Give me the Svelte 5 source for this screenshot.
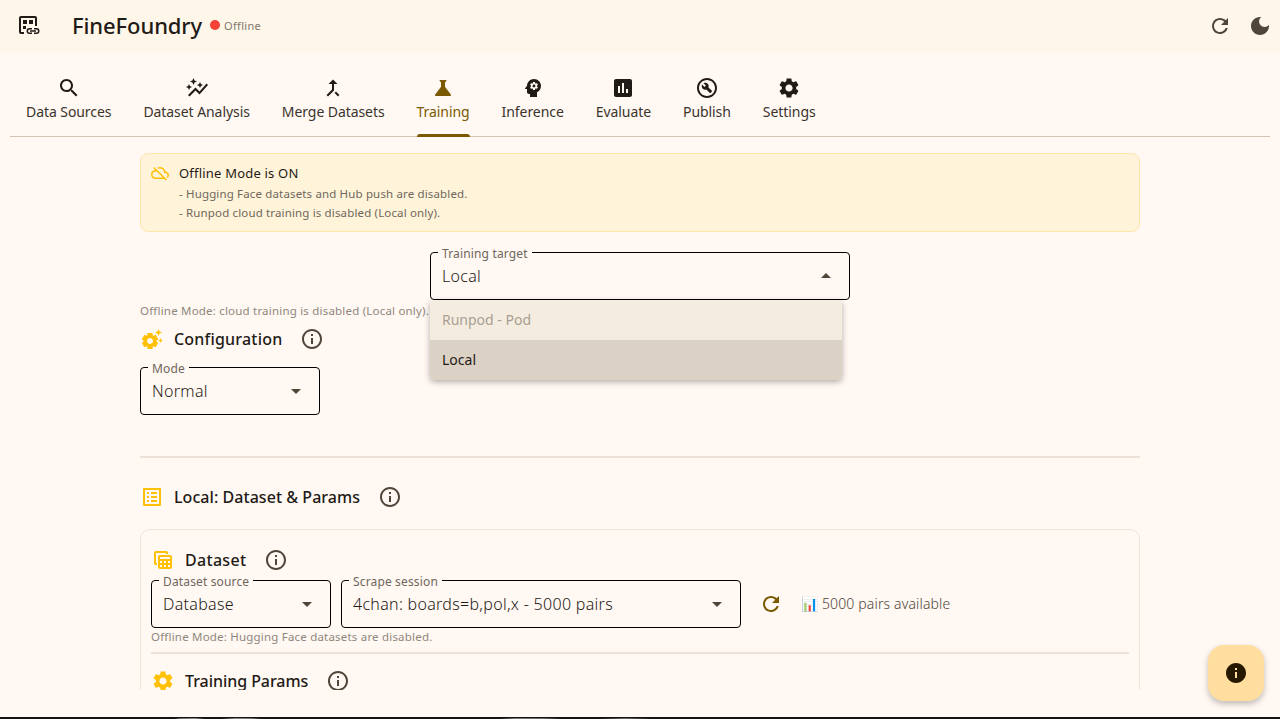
<script>
  const d = {
    search: 'M15.5 14h-.79l-.28-.27C15.41 12.59 16 11.11 16 9.5 16 5.91 13.09 3 9.5 3S3 5.91 3 9.5 5.91 16 9.5 16c1.61 0 3.09-.59 4.23-1.57l.27.28v.79l5 4.99L20.49 19l-4.99-5zm-6 0C7.01 14 5 11.99 5 9.5S7.01 5 9.5 5 14 7.01 14 9.5 11.99 14 9.5 14z',
    graph: 'M14.06 9.94 12 9l2.06-.94L15 6l.94 2.06L18 9l-2.06.94L15 12l-.94-2.06zM4 14l.94-2.06L7 11l-2.06-.94L4 8l-.94 2.06L1 11l2.06.94L4 14zm4.5-5 1.09-2.41L12 5.5 9.59 4.41 8.5 2 7.41 4.41 5 5.5l2.41 1.09L8.5 9zm-4 11.5 6-6.01 4 4L23 8.93l-1.41-1.41-7.09 7.97-4-4L3 19l1.5 1.5z',
    merge: 'M17 20.41 18.41 19 15 15.59 13.59 17 17 20.41zM7.5 8H11v5.59L5.59 19 7 20.41l6-6V8h3.5L12 3.5 7.5 8z',
    science: 'M19.8 18.4 14 10.67V6.5l1.35-1.69c.26-.33.03-.81-.39-.81H9.04c-.42 0-.65.48-.39.81L10 6.5v4.17L4.2 18.4c-.49.66-.02 1.6.8 1.6h14c.82 0 1.29-.94.8-1.6z',
    psych: 'M13 8.57c-.79 0-1.43.64-1.43 1.43s.64 1.43 1.43 1.43 1.43-.64 1.43-1.43-.64-1.43-1.43-1.43zM13 3C9.25 3 6.2 5.94 6.02 9.64L4.1 12.2c-.25.33-.01.8.4.8H6v3c0 1.1.9 2 2 2h1v3h7v-4.68c2.36-1.12 4-3.53 4-6.32 0-3.87-3.13-7-7-7zm3 7c0 .13-.01.26-.02.39l.83.66c.08.06.1.16.05.25l-.8 1.39c-.05.09-.16.12-.24.09l-.99-.4c-.21.16-.43.29-.67.39L14 13.83c-.01.1-.1.17-.2.17h-1.6c-.1 0-.18-.07-.2-.17l-.15-1.06c-.25-.1-.47-.23-.68-.39l-.99.4c-.09.03-.2 0-.25-.09l-.8-1.39c-.05-.08-.03-.19.05-.25l.84-.66c-.01-.13-.02-.26-.02-.39s.02-.27.04-.39l-.85-.66c-.08-.06-.1-.16-.05-.26l.8-1.38c.05-.09.15-.12.24-.09l1 .4c.2-.15.43-.29.67-.39L12 6.17c.02-.1.1-.17.2-.17h1.6c.1 0 .18.07.2.17l.15 1.06c.24.1.46.23.67.39l1-.4c.09-.03.2 0 .24.09l.8 1.38c.05.09.03.2-.05.26l-.85.66c.03.12.04.25.04.39z',
    assess: 'M19 3H5c-1.1 0-2 .9-2 2v14c0 1.1.9 2 2 2h14c1.1 0 2-.9 2-2V5c0-1.1-.9-2-2-2zM9 17H7v-7h2v7zm4 0h-2V7h2v10zm4 0h-2v-4h2v4z',
    build: 'M12 2C6.48 2 2 6.48 2 12s4.48 10 10 10 10-4.48 10-10S17.52 2 12 2zm0 18c-4.41 0-8-3.59-8-8s3.59-8 8-8 8 3.59 8 8-3.59 8-8 8zM13.49 11.38c.43-1.22.17-2.64-.81-3.62-1.11-1.11-2.79-1.3-4.1-.59l2.35 2.35-1.41 1.41-2.35-2.35c-.71 1.32-.52 2.99.59 4.1.98.98 2.4 1.24 3.62.81l3.41 3.41c.2.2.51.2.71 0l1.4-1.4c.2-.2.2-.51 0-.71l-3.41-3.41z',
    gear: 'M19.14 12.94c.04-.3.06-.61.06-.94 0-.32-.02-.64-.07-.94l2.03-1.58c.18-.14.23-.41.12-.61l-1.92-3.32c-.12-.22-.37-.29-.59-.22l-2.39.96c-.5-.38-1.03-.7-1.62-.94l-.36-2.54c-.04-.24-.24-.41-.48-.41h-3.84c-.24 0-.43.17-.47.41l-.36 2.54c-.59.24-1.13.57-1.62.94l-2.39-.96c-.22-.08-.47 0-.59.22L2.74 8.87c-.12.21-.08.47.12.61l2.03 1.58c-.05.3-.09.63-.09.94s.02.64.07.94l-2.03 1.58c-.18.14-.23.41-.12.61l1.92 3.32c.12.22.37.29.59.22l2.39-.96c.5.38 1.03.7 1.62.94l.36 2.54c.05.24.24.41.48.41h3.84c.24 0 .44-.17.47-.41l.36-2.54c.59-.24 1.13-.56 1.62-.94l2.39.96c.22.08.47 0 .59-.22l1.92-3.32c.12-.22.07-.47-.12-.61l-2.01-1.58zM12 15.6c-1.98 0-3.6-1.62-3.6-3.6s1.62-3.6 3.6-3.6 3.6 1.62 3.6 3.6-1.62 3.6-3.6 3.6z',
    refresh: 'M17.65 6.35C16.2 4.9 14.21 4 12 4c-4.42 0-7.99 3.58-7.99 8s3.57 8 7.99 8c3.73 0 6.84-2.55 7.73-6h-2.08c-.82 2.33-3.04 4-5.65 4-3.31 0-6-2.69-6-6s2.69-6 6-6c1.66 0 3.14.69 4.22 1.78L13 11h7V4l-2.35 2.35z',
    moon: 'M12 3c-4.97 0-9 4.03-9 9s4.03 9 9 9 9-4.03 9-9c0-.46-.04-.92-.1-1.36-.98 1.37-2.58 2.26-4.4 2.26-2.98 0-5.4-2.42-5.4-5.4 0-1.81.89-3.42 2.26-4.4-.44-.06-.9-.1-1.36-.1z',
    cloudoff: 'M24 15c0-2.64-2.05-4.78-4.65-4.96C18.67 6.59 15.64 4 12 4c-1.33 0-2.57.36-3.65.97l1.49 1.49C10.51 6.17 11.23 6 12 6c3.04 0 5.5 2.46 5.5 5.5v.5H19c1.66 0 3 1.34 3 3 0 .99-.48 1.85-1.21 2.4l1.41 1.41c1.09-.92 1.8-2.27 1.8-3.81zM4.41 3.86 3 5.27l2.77 2.77h-.42C2.34 8.36 0 10.91 0 14c0 3.31 2.69 6 6 6h11.73l2 2 1.41-1.41L4.41 3.86zM6 18c-2.21 0-4-1.79-4-4s1.79-4 4-4h1.73l8 8H6z',
    info: 'M11 7h2v2h-2zm0 4h2v6h-2zm1-9C6.48 2 2 6.48 2 12s4.48 10 10 10 10-4.48 10-10S17.52 2 12 2zm0 18c-4.41 0-8-3.59-8-8s3.59-8 8-8 8 3.59 8 8-3.59 8-8 8z',
    infoFill: 'M12 2C6.48 2 2 6.48 2 12s4.48 10 10 10 10-4.48 10-10S17.52 2 12 2zm1 15h-2v-6h2v6zm0-8h-2V7h2v2z',
    suggest: 'M17.41 6.59 15 5.5l2.41-1.09L18.5 2l1.09 2.41L22 5.5l-2.41 1.09L18.5 9l-1.09-2.41zm3.87 6.13L20.5 11l-.78 1.72-1.72.78 1.72.78.78 1.72.78-1.72L23 13.5l-1.72-.78zm-5.04 1.65 1.94 1.47-2.5 4.33-2.24-.94c-.2.13-.42.26-.64.37l-.3 2.4h-5l-.3-2.41c-.22-.11-.43-.23-.64-.37l-2.24.94-2.5-4.33 1.94-1.47c-.01-.11-.01-.24-.01-.36s0-.25.01-.37l-1.94-1.47 2.5-4.33 2.24.94c.2-.13.42-.26.64-.37L7.5 6h5l.3 2.41c.22.11.43.23.64.37l2.24-.94 2.5 4.33-1.94 1.47c.01.12.01.24.01.37s0 .24-.01.36zM13 14c0-1.66-1.34-3-3-3s-3 1.34-3 3 1.34 3 3 3 3-1.34 3-3z',
    list: 'M19 5v14H5V5h14m1.1-2H3.9c-.5 0-.9.4-.9.9v16.2c0 .4.4.9.9.9h16.2c.4 0 .9-.5.9-.9V3.9c0-.5-.5-.9-.9-.9zM11 7h6v2h-6V7zm0 4h6v2h-6v-2zm0 4h6v2h-6zM7 7h2v2H7zm0 4h2v2H7zm0 4h2v2H7z',
    table: 'M19 7H9c-1.1 0-2 .9-2 2v10c0 1.1.9 2 2 2h10c1.1 0 2-.9 2-2V9c0-1.1-.9-2-2-2zm0 2v2H9V9h10zm-6 6v-2h2v2h-2zm2 2v2h-2v-2h2zm-4-2H9v-2h2v2zm6-2h2v2h-2v-2zm-8 4h2v2H9v-2zm8 2v-2h2v2h-2zM6 17H5c-1.1 0-2-.9-2-2V5c0-1.1.9-2 2-2h10c1.1 0 2 .9 2 2v1h-2V5H5v10h1v2z',
    logo: 'M4 2h14a2 2 0 0 1 2 2v8h-2V4H4v14h3v2H4a2 2 0 0 1-2-2V4a2 2 0 0 1 2-2zM6 6h4v4H6zM12 6h4v4h-4zM6 12h3v3H6zM15 14h-2.5a3 3 0 0 0 0 6H15v-1.5h-2.5a1.5 1.5 0 0 1 0-3H15zM17 14h2.5a3 3 0 0 1 0 6H17v-1.5h2.5a1.5 1.5 0 0 0 0-3H17zM13 16.25h6v1.5h-6z',
  };
  const tabs = [
    ['Data Sources', d.search], ['Dataset Analysis', d.graph], ['Merge Datasets', d.merge],
    ['Training', d.science, true], ['Inference', d.psych], ['Evaluate', d.assess],
    ['Publish', d.build], ['Settings', d.gear],
  ];
</script>

{#snippet icon(path, size = 24)}
  <svg width={size} height={size} viewBox="0 0 24 24" fill="currentColor" aria-hidden="true"><path d={path} /></svg>
{/snippet}

{#snippet arrow(up = false)}
  <svg class="arrow" width="24" height="24" viewBox="0 0 24 24" fill="currentColor" aria-hidden="true"><path d={up ? 'M7 14l5-5 5 5z' : 'M7 10l5 5 5-5z'} /></svg>
{/snippet}

{#snippet heading(path, title, cls = '')}
  <div class="heading {cls}">
    <span class="hicon">{@render icon(path, 24)}</span>
    <span class="htitle">{title}</span>
    <span class="hinfo">{@render icon(d.info, 24)}</span>
  </div>
{/snippet}

<div class="page">
  <header class="top">
    <span class="logo">{@render icon(d.logo, 24)}</span>
    <h1>FineFoundry</h1>
    <span class="dot"></span>
    <span class="status">Offline</span>
    <span class="spacer"></span>
    <span class="act a1">{@render icon(d.refresh, 24)}</span>
    <span class="act a2">{@render icon(d.moon, 24)}</span>
  </header>

  <nav class="tabs">
    {#each tabs as t}
      <div class="tab" class:active={t[2]}>
        {@render icon(t[1], 24)}
        <span>{t[0]}</span>
      </div>
    {/each}
  </nav>

  <main class="scroll">
    <div class="col">
      <section class="banner">
        <span class="bicon">{@render icon(d.cloudoff, 18)}</span>
        <div class="btext">
          <div class="btitle">Offline Mode is ON</div>
          <div class="bline">- Hugging Face datasets and Hub push are disabled.</div>
          <div class="bline">- Runpod cloud training is disabled (Local only).</div>
        </div>
      </section>

      <div class="target-row">
        <div class="field target">
          <span class="flabel">Training target</span>
          <span class="fvalue">Local</span>
          {@render arrow(true)}
          <div class="menu">
            <div class="opt disabled">Runpod - Pod</div>
            <div class="opt sel">Local</div>
          </div>
        </div>
      </div>
      <p class="help h1">Offline Mode: cloud training is disabled (Local only).</p>

      {@render heading(d.suggest, 'Configuration', 'config')}
      <div class="field mode">
        <span class="flabel">Mode</span>
        <span class="fvalue">Normal</span>
        {@render arrow()}
      </div>

      <hr class="rule r1" />

      {@render heading(d.list, 'Local: Dataset & Params', 'local')}

      <section class="card">
        {@render heading(d.table, 'Dataset', 'dataset')}
        <div class="row">
          <div class="field source">
            <span class="flabel">Dataset source</span>
            <span class="fvalue">Database</span>
            {@render arrow()}
          </div>
          <div class="field session">
            <span class="flabel">Scrape session</span>
            <span class="fvalue">4chan: boards=b,pol,x - 5000 pairs</span>
            {@render arrow()}
          </div>
          <span class="reload">{@render icon(d.refresh, 24)}</span>
          <span class="pairs">📊 5000 pairs available</span>
        </div>
        <p class="help h2">Offline Mode: Hugging Face datasets are disabled.</p>
        <hr class="rule r2" />
        {@render heading(d.gear, 'Training Params', 'params')}
      </section>
    </div>
  </main>

  <button class="fab" aria-label="Info">{@render icon(d.infoFill, 24)}</button>
  <div class="edge"></div>
</div>

<style>
  :global(body) { margin: 0; background: #fff8f3; }
  .page {
    position: relative;
    width: 1280px;
    height: 719px;
    overflow: hidden;
    display: flex;
    flex-direction: column;
    background: #fff8f3;
    color: #1f1b16;
    font-family: "Noto Sans", "Open Sans", sans-serif;
  }
  svg { display: block; flex: none; }
  .top {
    height: 52px;
    flex: none;
    display: flex;
    align-items: center;
    background: #fff6ea;
    padding: 0 8px 0 17px;
  }
  .logo { width: 24px; height: 24px; margin-top: -1px; }
  h1 {
    margin: -2px 0 0 31px;
    font-size: 22px;
    letter-spacing: -0.1px;
    font-weight: 500;
    color: #1f1b16;
    line-height: 28px;
  }
  .dot { width: 10px; height: 10px; border-radius: 50%; background: #f44336; margin: -2px 0 0 8px; }
  .status { margin: -1px 0 0 4px; font-size: 11px; letter-spacing: 0.3px; color: #7e766b; }
  .spacer { flex: 1; }
  .act { color: #4f4539; }
  .a1 { margin-right: 16px; }

  .tabs {
    flex: none;
    height: 85px;
    box-sizing: border-box;
    margin: 0 10px;
    display: flex;
    border-bottom: 1px solid #d3c4b4;
  }
  .tab {
    display: flex;
    flex-direction: column;
    align-items: center;
    padding: 24px 16px 0;
    gap: 2px;
    position: relative;
    font-size: 14px;
    letter-spacing: -0.07px;
    line-height: 20px;
    color: #1f1b16;
  }
  .tab span { color: #3a342c; }
  .tab.active { color: #7a5900; }
  .tab.active span { color: #7a5900; }
  .tab.active::after {
    content: '';
    position: absolute;
    left: 16px;
    right: 16px;
    bottom: -1px;
    height: 3px;
    border-radius: 3px 3px 0 0;
    background: #7a5900;
  }

  .scroll { flex: none; height: 553px; overflow: hidden; }
  .col { width: 1000px; margin: 0 auto; padding-top: 16px; }

  .banner {
    box-sizing: border-box;
    height: 79px;
    display: flex;
    gap: 10px;
    padding: 10px;
    background: #fff3d9;
    border: 1px solid #ffe6ad;
    border-radius: 8px;
  }
  .bicon { color: #ffc107; }
  .btitle { font-size: 13px; letter-spacing: 0.2px; line-height: 18px; margin-bottom: 2px; color: #1f1b16; }
  .bline { font-size: 11.5px; letter-spacing: 0.15px; line-height: 19px; color: #6f675c; }

  .target-row { display: flex; justify-content: center; margin-top: 20px; }
  .field {
    box-sizing: border-box;
    position: relative;
    height: 48px;
    flex: none;
    border: 1px solid #000;
    border-radius: 4px;
    display: flex;
    align-items: center;
    justify-content: space-between;
    padding: 0 11px;
  }
  .arrow { color: #4f4539; }
  .flabel {
    position: absolute;
    left: 7px;
    top: -5px;
    padding: 0 4px;
    background: #fff8f3;
    font-size: 12px;
    letter-spacing: 0.15px;
    line-height: 12px;
    color: #6f675c;
    white-space: nowrap;
  }
  .fvalue { font-size: 16px; letter-spacing: 0.3px; font-weight: 300; color: #1f1b16; white-space: nowrap; }
  .target { width: 420px; }
  .mode { width: 180px; margin-top: 16px; }
  .source { width: 180px; }
  .session { width: 400px; }
  .menu {
    position: absolute;
    left: -1px;
    top: 47px;
    width: 412px;
    border-radius: 4px;
    overflow: hidden;
    box-shadow: 0 2px 6px rgba(0, 0, 0, 0.3);
    z-index: 2;
    font-size: 14px;
  }
  .opt { height: 40px; line-height: 40px; padding-left: 12px; }
  .disabled { background: #f5ece0; color: #a89f94; }
  .sel { background: #dbd1c5; color: #1f1b16; }

  .help { margin: 0; font-size: 11.5px; letter-spacing: 0.2px; line-height: 14px; color: #8f877c; white-space: nowrap; }
  .h1 { margin-top: 4px; }
  .heading { display: flex; align-items: center; height: 24px; }
  .hicon { color: #ffc107; width: 24px; margin-right: 10px; }
  .htitle { font-size: 16px; line-height: 16px; font-weight: 500; color: #1f1b16; }
  .hinfo { color: #4f4539; margin-left: 18px; }
  .config { margin-top: 9px; }
  .config .htitle { letter-spacing: 0.2px; }
  .dataset .htitle { letter-spacing: 0.3px; }
  .local { margin-top: 27px; }
  .local .htitle { letter-spacing: 0.05px; }
  .params .htitle { letter-spacing: -0.05px; }
  .rule { border: 0; height: 2px; background: #ebe1d6; margin: 0; }
  .r1 { margin-top: 41px; }
  .card {
    margin-top: 20px;
    box-sizing: border-box;
    height: 300px;
    border: 1px solid #eee5da;
    border-radius: 10px;
    padding: 18px 10px 0;
  }
  .row { display: flex; align-items: center; gap: 10px; margin-top: 8px; }
  .reload { color: #7a5900; margin-left: 8px; }
  .pairs { margin: -2px 0 0 8px; font-size: 14px; letter-spacing: 0.15px; color: #4f4539; font-weight: 300; }
  .h2 { margin-top: 2px; }
  .r2 { margin-top: 8px; }
  .params { margin-top: 15px; }

  .fab {
    position: absolute;
    left: 1208px;
    top: 645px;
    width: 56px;
    height: 56px;
    border: 0;
    border-radius: 16px;
    background: #ffdea0;
    color: #261900;
    padding: 16px;
    box-shadow: 0 3px 6px rgba(0, 0, 0, 0.25);
  }
  .edge {
    position: absolute;
    left: 0;
    right: 0;
    bottom: 0;
    height: 2px;
    background:
      linear-gradient(90deg,
        transparent 175px, #6a6a6a 180px, #8a8a8a 195px, transparent 205px,
        transparent 222px, #8a8a8a 235px, #777 250px, transparent 262px,
        transparent 500px, #777 515px, #666 545px, transparent 560px,
        transparent 600px, #6a6a6a 625px, transparent 650px) 0 1px / 100% 1px no-repeat,
      #141414;
  }
</style>
